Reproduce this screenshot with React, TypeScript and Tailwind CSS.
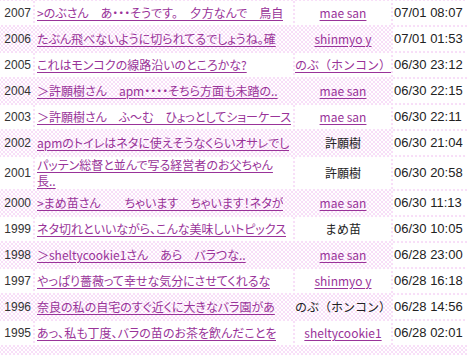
type Post = {
  no: number;
  title: string;
  title2?: string;
  name: string;
  linked: boolean;
  date: string;
};

const posts: Post[] = [
  { no: 2007, title: '>のぶさん　あ・・・そうです。　夕方なんで　鳥自', name: 'mae san', linked: true, date: '07/01 08:07' },
  { no: 2006, title: 'たぶん飛べないように切られてるでしょうね。確', name: 'shinmyo y', linked: true, date: '07/01 01:53' },
  { no: 2005, title: 'これはモンコクの線路沿いのところかな?', name: 'のぶ（ホンコン）', linked: true, date: '06/30 23:12' },
  { no: 2004, title: '＞許願樹さん　apm・・・・そちら方面も未踏の..', name: 'mae san', linked: true, date: '06/30 22:15' },
  { no: 2003, title: '＞許願樹さん　ふ〜む　ひょっとしてショーケース', name: 'mae san', linked: true, date: '06/30 22:11' },
  { no: 2002, title: 'apmのトイレはネタに使えそうなくらいオサレでし', name: '許願樹', linked: false, date: '06/30 21:04' },
  { no: 2001, title: 'パッテン総督と並んで写る経営者のお父ちゃん', title2: '長..', name: '許願樹', linked: false, date: '06/30 20:58' },
  { no: 2000, title: '>まめ苗さん　　ちゃいます　ちゃいます！ネタが', name: 'mae san', linked: true, date: '06/30 11:13' },
  { no: 1999, title: 'ネタ切れといいながら、こんな美味しいトピックス', name: 'まめ苗', linked: false, date: '06/30 10:05' },
  { no: 1998, title: '＞sheltycookie1さん　あら　バラつな..', name: 'mae san', linked: true, date: '06/28 23:00' },
  { no: 1997, title: 'やっぱり薔薇って幸せな気分にさせてくれるな', name: 'shinmyo y', linked: true, date: '06/28 16:18' },
  { no: 1996, title: '奈良の私の自宅のすぐ近くに大きなバラ園があ', name: 'のぶ（ホンコン）', linked: false, date: '06/28 14:56' },
  { no: 1995, title: 'あっ、私も丁度、バラの苗のお茶を飲んだことを', name: 'sheltycookie1', linked: true, date: '06/28 02:01' },
];

// pale pink dotted wallpaper showing between and behind the rows
const dots =
  'bg-white bg-[radial-gradient(circle,#f4cdf4_0.6px,transparent_0.9px),radial-gradient(circle,#f4cdf4_0.6px,transparent_0.9px)] bg-[length:4px_4px] bg-[position:0_0,2px_2px]';

function Row({ post, shaded }: { post: Post; shaded: boolean }) {
  const cell = shaded ? '' : 'bg-white';
  return (
    <div className="flex gap-[2px]">
      <div className={`w-[33px] shrink-0 min-h-[24px] flex items-center justify-end pr-[2px] text-[12px] text-[#333] font-['Liberation_Sans',sans-serif] ${cell}`}>
        {post.no}
      </div>
      <div className={`w-[258px] shrink-0 min-h-[24px] flex items-center px-[2px] overflow-hidden ${cell}`}>
        <a
          href="#"
          className="block whitespace-nowrap overflow-hidden text-[12px] leading-[16px] text-[#993399] underline underline-offset-2 [font-feature-settings:'palt']"
        >
          {post.title}
          {post.title2 && (
            <>
              <br />
              {post.title2}
            </>
          )}
        </a>
      </div>
      <div className={`w-[96px] shrink-0 min-h-[24px] flex items-center justify-center text-[12px] ${cell}`}>
        {post.linked ? (
          <a href="#" className="text-[#993399] underline underline-offset-2">
            {post.name}
          </a>
        ) : (
          <span className="text-[#222]">{post.name}</span>
        )}
      </div>
      <div className="flex-1 min-h-[24px] flex items-center pl-[1px] bg-white text-[13px] text-[#222] font-['Liberation_Sans',sans-serif] whitespace-nowrap">
        {post.date}
      </div>
    </div>
  );
}

export default function App() {
  return (
    <div
      className={`w-[467px] h-[355px] overflow-hidden pt-[1px] flex flex-col gap-[2px] font-['Noto_Sans_CJK_JP',sans-serif] ${dots}`}
    >
      {posts.map((p, i) => (
        <Row key={p.no} post={p} shaded={i % 2 === 1} />
      ))}
    </div>
  );
}
